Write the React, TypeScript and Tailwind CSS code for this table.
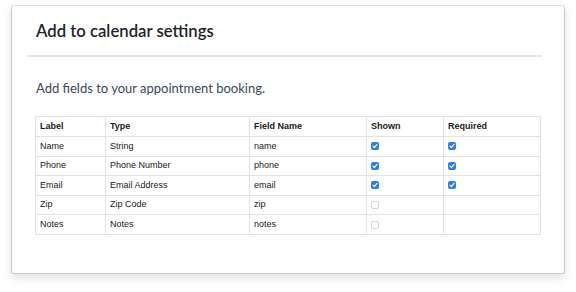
import React, { FC } from "react";

type Field = {
  label: string;
  type: string;
  name: string;
  shown: boolean;
  required: boolean | null;
};

const fields: Field[] = [
  { label: "Name", type: "String", name: "name", shown: true, required: true },
  { label: "Phone", type: "Phone Number", name: "phone", shown: true, required: true },
  { label: "Email", type: "Email Address", name: "email", shown: true, required: true },
  { label: "Zip", type: "Zip Code", name: "zip", shown: false, required: null },
  { label: "Notes", type: "Notes", name: "notes", shown: false, required: null },
];

const Check: FC<{ checked: boolean }> = ({ checked }) =>
  checked ? (
    <span className="flex h-[8px] w-[8px] items-center justify-center rounded-[2px] bg-[#2c7cf4]">
      <svg viewBox="0 0 8 8" className="h-[8px] w-[8px]">
        <path d="M2 4.2 3.4 5.6 6 2.4" fill="none" stroke="#fff" strokeWidth="1.2" strokeLinecap="round" strokeLinejoin="round" />
      </svg>
    </span>
  ) : (
    <span className="block h-[8px] w-[8px] rounded-[2px] border border-[#d4d4d4] bg-white" />
  );

const cell = "border border-[#e3e3e3] px-[4px] py-0 text-left align-middle";

const App: FC = () => {
  return (
    <div className="h-[292px] w-[576px] bg-white pl-[11px] pt-[5px] font-['Liberation_Sans',Arial,sans-serif]">
      <div className="h-[269px] w-[554px] rounded-[3px] border border-[#c9c9c9] border-t-[#e2e2e2] bg-white shadow-[0_4px_10px_rgba(0,0,0,0.12)]">
        <div className="flex h-[49px] items-center pl-[24px] pt-[2px]">
          <h1 className="font-['Lato',sans-serif] text-[16.7px] font-semibold text-[#1f2328]">
            Add to calendar settings
          </h1>
        </div>
        <div className="ml-[15px] h-[2px] w-[515px] bg-[#e4e4e4]" />
        <p className="mt-[21px] pl-[24px] font-['Lato',sans-serif] text-[13px] leading-[20px] text-[#3b4859]">
          Add fields to your appointment booking.
        </p>
        <table className="ml-[23px] mt-[18px] w-[505px] table-fixed border-collapse text-[9px] text-[#1a1a1a]">
          <colgroup>
            <col className="w-[70px]" />
            <col className="w-[144px]" />
            <col className="w-[117px]" />
            <col className="w-[77px]" />
            <col className="w-[97px]" />
          </colgroup>
          <thead>
            <tr className="h-[20px] font-bold">
              <th className={cell}>Label</th>
              <th className={cell}>Type</th>
              <th className={cell}>Field Name</th>
              <th className={cell}>Shown</th>
              <th className={cell}>Required</th>
            </tr>
          </thead>
          <tbody>
            {fields.map((f) => (
              <tr key={f.name} className="h-[19.6px]">
                <td className={cell}>{f.label}</td>
                <td className={cell}>{f.type}</td>
                <td className={cell}>{f.name}</td>
                <td className={cell}>
                  <Check checked={f.shown} />
                </td>
                <td className={cell}>{f.required !== null && <Check checked={f.required} />}</td>
              </tr>
            ))}
          </tbody>
        </table>
      </div>
    </div>
  );
};

export default App;
